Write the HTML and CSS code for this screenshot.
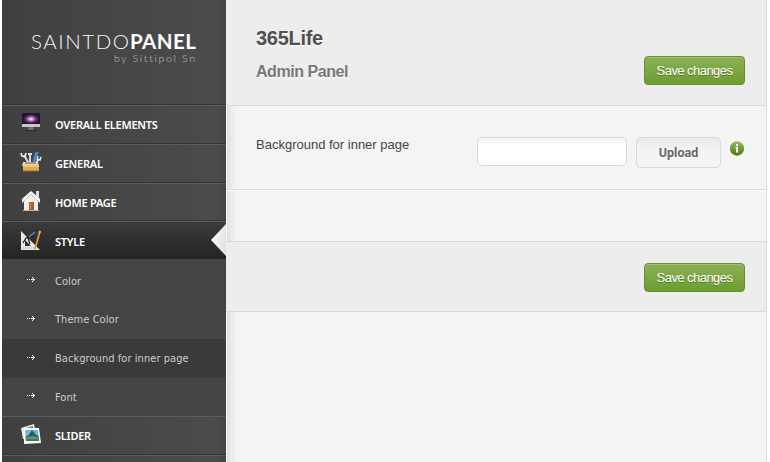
FILE: index.html
```html
<!DOCTYPE html>
<html lang="en">
<head>
<meta charset="utf-8">
<title>365Life Admin Panel</title>
<link rel="stylesheet" href="styles.css">
</head>
<body>
<div class="layout">
  <aside class="sidebar">
    <div class="brand">
      <svg width="224" height="104" viewBox="0 0 224 104">
        <text class="brand-thin" x="29" y="49" textLength="98">SAINTDO</text>
        <text class="brand-bold" x="128" y="49" textLength="66">PANEL</text>
        <text class="brand-by" x="112" y="62" textLength="81">by Sittipol Sn</text>
      </svg>
    </div>
    <nav class="menu">
      <a class="item">
        <svg class="icon" viewBox="0 0 22 22">
          <defs><radialGradient id="sky"><stop offset="0" stop-color="#fff"/><stop offset=".25" stop-color="#d992dc"/><stop offset=".65" stop-color="#65316f"/><stop offset="1" stop-color="#211629"/></radialGradient></defs>
          <rect x="2" y="1" width="18" height="12" fill="#201924"/><rect x="3" y="2" width="16" height="10" fill="url(#sky)"/>
          <path d="M2 12h18v3H2z" fill="#c9c9c9"/><path d="M9 15h4l1 3H8z" fill="#777"/><path d="M6 18h10v1H6z" fill="#292929"/>
        </svg><span>OVERALL ELEMENTS</span></a>
      <a class="item">
        <svg class="icon" viewBox="0 0 22 22">
          <path d="M4 4l5 9M10 3v9M19 8l-4 5" stroke="#ddd" stroke-width="2"/><path d="M1 2l1 3 3 1 1-4M18 5l-1 3 3 1 1-3" fill="none" stroke="#eee" stroke-width="1.6"/>
          <path d="M8 3h4" stroke="#ddd" stroke-width="2"/><path d="M17 1l-3 10" stroke="#4688c8" stroke-width="3.4"/>
          <path d="M3 11h15l1 4H2z" fill="#e5d6b5"/><path d="M5 12h11" stroke="#6b5a42"/><path d="M3 14h16v6H3z" fill="#e2aa50"/><path d="M3 15h16" stroke="#ffe0a0"/><path d="M3 20h16" stroke="#9c6a28"/>
        </svg><span>GENERAL</span></a>
      <a class="item">
        <svg class="icon" viewBox="0 0 22 22">
          <path d="M16 1h3v8h-3z" fill="#ddd"/><path d="M4 10l7-7 7 7v11H4z" fill="#f1efeb"/><path d="M2 13V9l9-8 9 8v4l-9-9z" fill="#fff"/><path d="M2 13l9-9 9 9" fill="none" stroke="#aaa" stroke-width=".7"/>
          <path d="M9 12h5v8H9z" fill="#b35a25"/><path d="M10.5 13v6" stroke="#dc9257"/><path d="M3 20.5h16" stroke="#b9b5a9"/>
        </svg><span>HOME PAGE</span></a>
      <a class="item active">
        <svg class="icon" viewBox="0 0 22 22">
          <path fill-rule="evenodd" d="M1 1l19 19H1zM5 10v6h6z" fill="#e8e8e8"/><path d="M3 18h14" stroke="#999" stroke-dasharray="1 1"/>
          <path d="M3 13l3-5 8-2M8 8l2 6" fill="none" stroke="#171717" stroke-width="1.200"/><path d="M9 7l6-5" stroke="#3e7baa" stroke-width="1.800"/>
          <path d="M20 1l-5 18" stroke="#e59a32" stroke-width="1.8"/><path d="M20 1l-.5 2" stroke="#e6b8a3" stroke-width="2"/>
        </svg><span>STYLE</span></a>
      <div class="submenu">
        <a class="sub"><svg class="arrow" viewBox="0 0 9 5"><path d="M0 2h1v1H0zM2 2h1v1H2zM4 2h4v1H4zM6 1h1v3H6zM5 0h1v1H5zM5 4h1v1H5z"/></svg>Color</a>
        <a class="sub"><svg class="arrow" viewBox="0 0 9 5"><path d="M0 2h1v1H0zM2 2h1v1H2zM4 2h4v1H4zM6 1h1v3H6zM5 0h1v1H5zM5 4h1v1H5z"/></svg>Theme Color</a>
        <a class="sub current"><svg class="arrow" viewBox="0 0 9 5"><path d="M0 2h1v1H0zM2 2h1v1H2zM4 2h4v1H4zM6 1h1v3H6zM5 0h1v1H5zM5 4h1v1H5z"/></svg>Background for inner page</a>
        <a class="sub"><svg class="arrow" viewBox="0 0 9 5"><path d="M0 2h1v1H0zM2 2h1v1H2zM4 2h4v1H4zM6 1h1v3H6zM5 0h1v1H5zM5 4h1v1H5z"/></svg>Font</a>
      </div>
      <a class="item">
        <svg class="icon" viewBox="0 0 22 22">
          <path d="M1 5l13-4 3 15H3z" fill="#eee"/><path d="M3 6l10-3v3z" fill="#777"/><path d="M4 5l15 0 2 15-17 1z" fill="#fff"/>
          <path d="M5 7h13l1 11H6z" fill="#72afe8"/><path d="M5.500 13l13-1 .5 6H6z" fill="#477e31"/><path d="M8 13l4-6 5 6z" fill="#315f43"/><path d="M6 15q6-3 12 0v1H6z" fill="#4b91ce"/>
        </svg><span>SLIDER</span></a>
      <div class="item next"></div>
    </nav>
  </aside>
  <main class="main">
    <header class="head">
      <div><h1>365Life</h1><h2>Admin Panel</h2></div>
      <button class="save">Save changes</button>
    </header>
    <section class="field">
      <label for="bg">Background for inner page</label>
      <input id="bg" type="text">
      <button class="upload">Upload</button>
      <svg class="info" viewBox="0 0 15 15"><defs><linearGradient id="green" x2="0" y2="1"><stop stop-color="#9abb5f"/><stop offset="1" stop-color="#4a7c11"/></linearGradient></defs><circle cx="7" cy="7.500" r="7.200" fill="url(#green)"/><path d="M6 3h2v2H6zM5.500 6H8v5.500H6V7h-.5z" fill="#fff"/></svg>
    </section>
    <section class="blank"></section>
    <footer class="foot"><button class="save">Save changes</button></footer>
    <div class="rest"></div>
  </main>
</div>
</body>
</html>
```
FILE: styles.css
```css
* { box-sizing: border-box; }
body { margin: 0; background: #fff; font-family: "Liberation Sans", Arial, sans-serif; }
.layout { display: flex; height: 462px; padding: 0 3px 0 2px; overflow: hidden; }
.sidebar { width: 224px; flex: none; background: linear-gradient(90deg, #404040, #4b4b4b 95%, #454545); }
.brand { height: 105px; border-bottom: 1px solid #343434; }
.brand svg { display: block; }
.brand text { font-family: Lato, sans-serif; fill: #f4f4f4; }
.brand .brand-thin { font-size: 20.500px; font-weight: 300; }
.brand .brand-bold { font-size: 20.500px; font-weight: 700; fill: #fff; }
.brand .brand-by { font-size: 10.500px; font-weight: 300; fill: #c4c4c4; font-variant-ligatures: none; }
.menu { font-family: "DejaVu Sans Condensed", "DejaVu Sans", sans-serif; font-stretch: condensed; font-size: 11px; }
.item { display: flex; position: relative; height: 39px; padding: 0 0 0 18px; gap: 13px; align-items: center; color: #fff; font-family: "Noto Sans", sans-serif; font-stretch: normal; font-weight: 600; letter-spacing: -.25px; border-top: 1px solid #5c5c5c; border-bottom: 1px solid #353535; }
.item:nth-child(3) { height: 38px; }
.icon { width: 22px; height: 22px; flex: none; margin-top: -3px; }
.item span { margin-top: -1px; }
.item:nth-child(3) span { margin-top: 1px; }
.item.active span { margin-top: 3px; }
.item.active .icon { margin-top: 2px; }
.item.active { height: 38px; background: linear-gradient(#3b3b3b, #242424); border-bottom-color: #242424; }
.item.active::after { content: ""; position: absolute; right: 0; top: 2px; width: 15px; height: 32px; background: linear-gradient(100deg, #fff, #dedede); clip-path: polygon(100% 0, 100% 100%, 0 50%); }
.submenu { height: 157px; padding-top: 3px; background: #444; letter-spacing: .06px; }
.sub { display: flex; align-items: center; height: 38.500px; padding-left: 25px; gap: 19px; color: #ccc; }
.sub:nth-child(1) { height: 38px; }
.sub:nth-child(2), .sub:nth-child(3) { height: 39px; }
.sub.current { background: #3a3a3a; }
.arrow { width: 9px; height: 5px; fill: #fff; margin-top: -3px; }
.main { flex: 1; background: #f4f4f4; border-right: 1px solid #d9d9d9; color: #444; }
.head { display: flex; justify-content: space-between; height: 106px; padding: 27px 21px 0 30px; background: #ededed; border-bottom: 1px solid #d9d9d9; }
h1 { margin: 0; font-size: 20px; line-height: 23px; color: #505050; text-shadow: 0 1px #fff; letter-spacing: -.3px; }
h2 { margin: 13px 0 0; font-size: 16px; line-height: 18px; color: #777; text-shadow: 0 1px #fff; letter-spacing: -.45px; }
.save { width: 101px; height: 29px; padding: 0 0 1px; margin-top: 29px; border: 1px solid #619326; border-radius: 4px; background: linear-gradient(#8cb15a, #6d9c30); box-shadow: inset 0 1px #a0bf75; font: 13px "Liberation Sans", Arial, sans-serif; letter-spacing: -.55px; color: #fff; text-shadow: 0 1px #527c23; }
.field { display: flex; height: 84px; padding: 31px 21px 0 30px; border-bottom: 1px solid #d9d9d9; }
.field, .blank, .rest { background: linear-gradient(90deg, #fff 1px, #dedede 1px, #ebebeb 5px, #f4f4f4 11px); }
label { width: 221px; font-size: 13px; line-height: 15px; }
input { width: 150px; height: 29px; padding: 0 6px; border: 1px solid #d9d9d9; border-radius: 5px; background: linear-gradient(#f4f4f4, #fff 8px); }
.upload { width: 85px; height: 31px; margin-left: 9px; border: 1px solid #d9d9d9; border-radius: 5px; background: linear-gradient(#e9e9e9, #f3f3f3 12px); font: bold 12.500px Roboto, sans-serif; color: #666; text-shadow: 0 1px #fff; }
.info { width: 15px; height: 15px; margin: 4px 0 0 9px; }
.blank { height: 52px; border-top: 1px solid #fff; border-bottom: 1px solid #d9d9d9; }
.foot { display: flex; justify-content: flex-end; height: 70px; padding-right: 21px; background: #ededed; border-bottom: 1px solid #d9d9d9; }
.foot .save { margin-top: 21px; }
.rest { height: 150px; }
```
